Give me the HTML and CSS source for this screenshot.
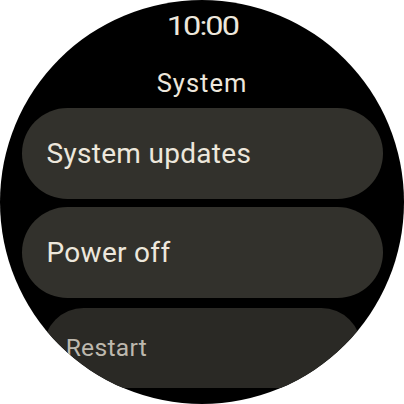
FILE: index.html
```html
<!DOCTYPE html>
<html>
<head>
<meta charset="utf-8">
<link rel="stylesheet" href="styles.css">
</head>
<body>
<div class="watch">
  <div class="time">10:00</div>
  <div class="title">System</div>
  <div class="list">
    <div class="chip"><span class="label">System updates</span></div>
    <div class="chip"><span class="label">Power off</span></div>
    <div class="chip chip-far"><span class="label">Restart</span></div>
  </div>
</div>
</body>
</html>
```

FILE: styles.css
```css
html, body {
  margin: 0;
  padding: 0;
  background: #ffffff;
}
.watch {
  width: 404px;
  height: 404px;
  border-radius: 50%;
  background: #000000;
  overflow: hidden;
  display: flex;
  flex-direction: column;
  align-items: center;
  font-family: Roboto, "Liberation Sans", sans-serif;
  color: #ede7dc;
}
.time {
  margin-top: 11px;
  height: 32px;
  line-height: 32px;
  font-size: 25px;
  letter-spacing: -1.5px;
  transform: scaleX(1.3);
}
.title {
  margin-top: 25px;
  height: 30px;
  line-height: 30px;
  font-size: 25.5px;
  letter-spacing: 1px;
}
.list {
  margin-top: 10px;
  display: flex;
  flex-direction: column;
  gap: 8px;
  width: 361px;
}
.chip {
  height: 91px;
  border-radius: 46px;
  background: #32312c;
  display: flex;
  align-items: center;
  padding: 0 25px;
  box-sizing: border-box;
}
.label {
  font-size: 28px;
  letter-spacing: 0.3px;
}
.chip-far {
  background: #2a2925;
  color: #bdb8ae;
  transform: scale(0.88);
  transform-origin: 50% 0;
  margin-top: 2px;
}
```
